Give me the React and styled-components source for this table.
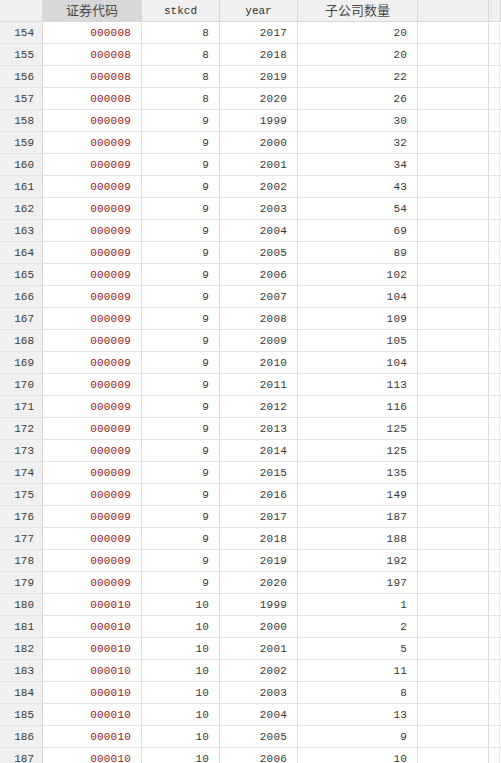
import React from "react";
import styled, { createGlobalStyle } from "styled-components";

const Global = createGlobalStyle`
  html, body { margin: 0; padding: 0; background: #ffffff; }
  body { overflow: hidden; }
`;

const COLS = "43px 99px 78px 78px 120px 71px 3px 1fr";

const Sheet = styled.div`
  width: 501px;
  height: 763px;
  overflow: hidden;
  background: #ffffff;
  font-family: "Liberation Mono", "Courier New", monospace;
  font-size: 11px;
  color: #383838;
`;

const Row = styled.div`
  display: grid;
  grid-template-columns: ${COLS};
  height: 22px;
`;

const HeadCell = styled.div`
  box-sizing: border-box;
  height: 22px;
  background: ${(p) => (p.$selected ? "#d8d8d8" : "#f0f0f0")};
  border-right: 1px solid ${(p) => (p.$soft ? "#e6e6e6" : "#d6d6d6")};
  border-bottom: 1px solid #d6d6d6;
  display: flex;
  align-items: center;
  justify-content: center;
  color: ${(p) => (p.$cjk ? "#4a4a4a" : "#333333")};
  font-family: ${(p) =>
    p.$cjk
      ? '"Noto Sans CJK SC", "Noto Sans", sans-serif'
      : '"Liberation Mono", "Courier New", monospace'};
  font-size: ${(p) => (p.$cjk ? "13px" : "11px")};
  padding-bottom: ${(p) => (p.$cjk ? "2px" : "0")};
`;

const IndexCell = styled.div`
  box-sizing: border-box;
  height: 22px;
  background: #f0f0f0;
  border-right: 1px solid #d6d6d6;
  border-bottom: 1px solid #e2e2e2;
  display: flex;
  align-items: center;
  justify-content: flex-end;
  padding-right: 8px;
  color: #3a3a3a;
`;

const Cell = styled.div`
  box-sizing: border-box;
  height: 22px;
  border-right: 1px solid ${(p) => (p.$soft ? "#ececec" : "#dcdcdc")};
  border-bottom: 1px solid #e2e2e2;
  display: flex;
  align-items: center;
  justify-content: flex-end;
  padding-right: 10px;
  color: ${(p) => (p.$str ? "#9c1515" : "#383838")};
  letter-spacing: 0.2px;
`;

const rows = [];
const add = (start, code, id, years, counts) => {
  counts.forEach((c, i) => {
    rows.push({ n: start + i, code, id, year: years + i, count: c });
  });
};
add(154, "000008", 8, 2017, [20, 20, 22, 26]);
add(158, "000009", 9, 1999, [30, 32, 34, 43, 54, 69, 89, 102, 104, 109, 105, 104, 113, 116, 125, 125, 135, 149, 187, 188, 192, 197]);
add(180, "000010", 10, 1999, [1, 2, 5, 11, 8, 13, 9, 10]);

export default function App() {
  return (
    <>
      <Global />
      <Sheet>
        <Row>
          <HeadCell />
          <HeadCell $selected $cjk>证券代码</HeadCell>
          <HeadCell>stkcd</HeadCell>
          <HeadCell>year</HeadCell>
          <HeadCell $cjk>子公司数量</HeadCell>
          <HeadCell />
          <HeadCell $soft />
          <HeadCell />
        </Row>
        {rows.map((r) => (
          <Row key={r.n}>
            <IndexCell>{r.n}</IndexCell>
            <Cell $str>{r.code}</Cell>
            <Cell>{r.id}</Cell>
            <Cell>{r.year}</Cell>
            <Cell>{r.count}</Cell>
            <Cell />
            <Cell $soft />
            <Cell />
          </Row>
        ))}
      </Sheet>
    </>
  );
}
